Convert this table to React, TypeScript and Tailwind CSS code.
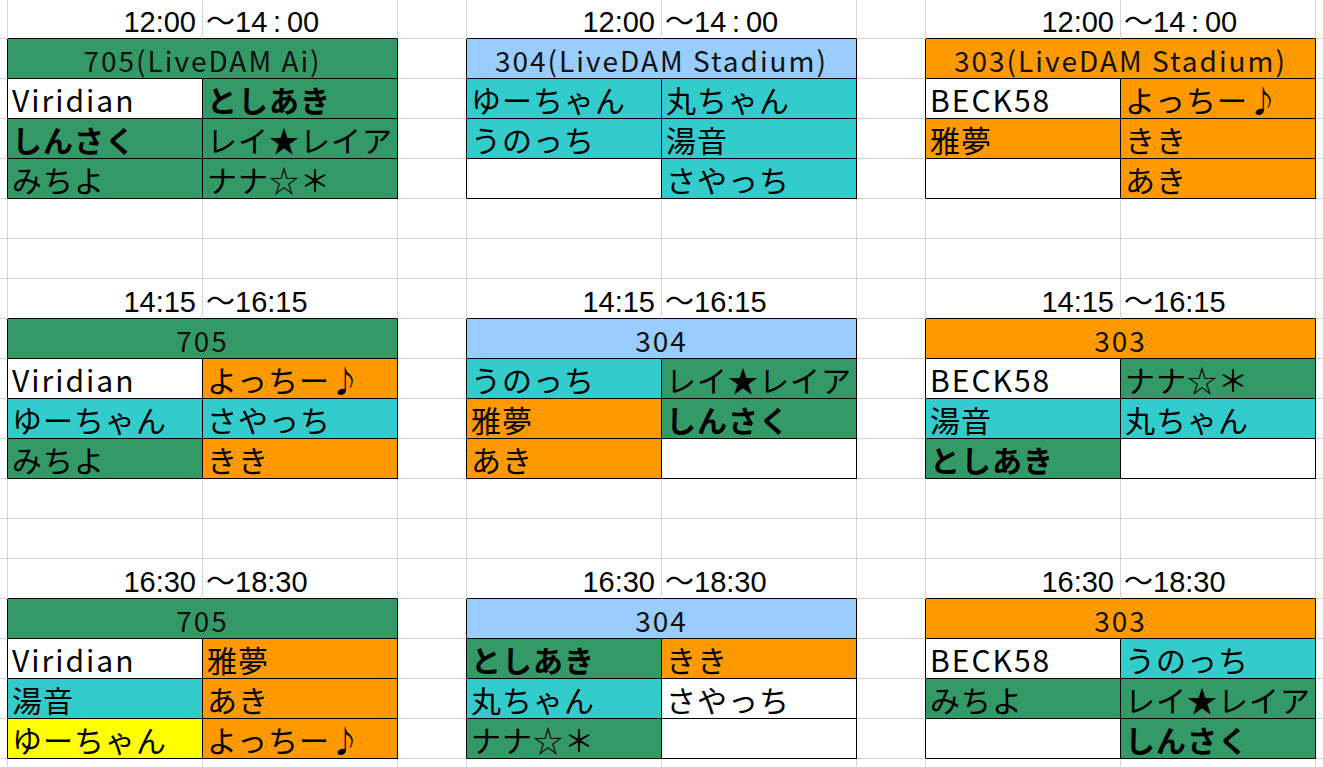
import React from "react";

type Fill = "white" | "green" | "cyan" | "orange" | "blue" | "yellow";
type Name = [string, Fill];

const fills: Record<Fill, string> = {
  white: "bg-white",
  green: "bg-[#339966]",
  cyan: "bg-[#33cccc]",
  orange: "bg-[#ff9900]",
  blue: "bg-[#99ccff]",
  yellow: "bg-[#ffff00]",
};

const boldNames = ["としあき", "しんさく"];

type Room = { title: string; fill: Fill; rows: [Name, Name][] };
type Slot = { from: string; to: string; rooms: Room[] };

const slots: Slot[] = [
  {
    from: "12:00",
    to: "～14\u2009:\u200900",
    rooms: [
      {
        title: "705(LiveDAM Ai)",
        fill: "green",
        rows: [
          [["Viridian", "white"], ["としあき", "green"]],
          [["しんさく", "green"], ["レイ★レイア", "green"]],
          [["みちよ", "green"], ["ナナ☆＊", "green"]],
        ],
      },
      {
        title: "304(LiveDAM Stadium)",
        fill: "blue",
        rows: [
          [["ゆーちゃん", "cyan"], ["丸ちゃん", "cyan"]],
          [["うのっち", "cyan"], ["湯音", "cyan"]],
          [["", "white"], ["さやっち", "cyan"]],
        ],
      },
      {
        title: "303(LiveDAM Stadium)",
        fill: "orange",
        rows: [
          [["BECK58", "white"], ["よっちー♪", "orange"]],
          [["雅夢", "orange"], ["きき", "orange"]],
          [["", "white"], ["あき", "orange"]],
        ],
      },
    ],
  },
  {
    from: "14:15",
    to: "～16:15",
    rooms: [
      {
        title: "705",
        fill: "green",
        rows: [
          [["Viridian", "white"], ["よっちー♪", "orange"]],
          [["ゆーちゃん", "cyan"], ["さやっち", "cyan"]],
          [["みちよ", "green"], ["きき", "orange"]],
        ],
      },
      {
        title: "304",
        fill: "blue",
        rows: [
          [["うのっち", "cyan"], ["レイ★レイア", "green"]],
          [["雅夢", "orange"], ["しんさく", "green"]],
          [["あき", "orange"], ["", "white"]],
        ],
      },
      {
        title: "303",
        fill: "orange",
        rows: [
          [["BECK58", "white"], ["ナナ☆＊", "green"]],
          [["湯音", "cyan"], ["丸ちゃん", "cyan"]],
          [["としあき", "green"], ["", "white"]],
        ],
      },
    ],
  },
  {
    from: "16:30",
    to: "～18:30",
    rooms: [
      {
        title: "705",
        fill: "green",
        rows: [
          [["Viridian", "white"], ["雅夢", "orange"]],
          [["湯音", "cyan"], ["あき", "orange"]],
          [["ゆーちゃん", "yellow"], ["よっちー♪", "orange"]],
        ],
      },
      {
        title: "304",
        fill: "blue",
        rows: [
          [["としあき", "green"], ["きき", "orange"]],
          [["丸ちゃん", "cyan"], ["さやっち", "white"]],
          [["ナナ☆＊", "green"], ["", "white"]],
        ],
      },
      {
        title: "303",
        fill: "orange",
        rows: [
          [["BECK58", "white"], ["うのっち", "cyan"]],
          [["みちよ", "green"], ["レイ★レイア", "green"]],
          [["", "white"], ["しんさく", "green"]],
        ],
      },
    ],
  },
];

const rowGrid =
  "grid h-[40px] grid-cols-[8px_195px_195px_69px_195px_195px_69px_195px_195px_1fr]";
const grid = "border-r border-b border-[#d4d4d4]";
const jp = "font-['Noto_Sans_CJK_JP','Noto_Sans',sans-serif]";
const latin = "font-['Liberation_Sans','Noto_Sans_CJK_JP',sans-serif]";

// plain sheet cell; right/bottom turn black where a coloured block begins
function Blank({ right, bottom }: { right?: boolean; bottom?: boolean }) {
  return (
    <div
      className={`border-r border-b ${right ? "border-r-black" : "border-r-[#d4d4d4]"} ${
        bottom ? "border-b-black" : "border-b-[#d4d4d4]"
      }`}
    />
  );
}

function EmptyRow() {
  return (
    <div className={rowGrid}>
      {Array.from({ length: 10 }).map((_, i) => (
        <div key={i} className={grid} />
      ))}
    </div>
  );
}

function TimeRow({ from, to }: { from: string; to: string }) {
  return (
    <div className={rowGrid}>
      <Blank />
      {[0, 1, 2].map((i) => (
        <React.Fragment key={i}>
          <div
            className={`flex items-end justify-end border-r border-b border-r-[#d4d4d4] border-b-black pr-[6px] pb-[1px] text-[29px] leading-none whitespace-nowrap text-black ${latin}`}
          >
            {from}
          </div>
          <div
            className={`flex items-end border-r border-b border-r-[#d4d4d4] border-b-black pl-[3px] pb-[1px] text-[29px] leading-none whitespace-nowrap text-black ${latin}`}
          >
            {to}
          </div>
          {i < 2 && <Blank />}
        </React.Fragment>
      ))}
      <Blank />
    </div>
  );
}

function HeaderRow({ rooms }: { rooms: Room[] }) {
  return (
    <div className={rowGrid}>
      <Blank right />
      {rooms.map((room, i) => (
        <React.Fragment key={i}>
          <div
            className={`col-span-2 flex items-end justify-center border-r border-b border-black pb-[4px] text-[28px] leading-none tracking-[2px] whitespace-nowrap text-[#111] ${jp} ${fills[room.fill]}`}
          >
            {room.title}
          </div>
          {i < 2 && <Blank right />}
        </React.Fragment>
      ))}
      <Blank />
    </div>
  );
}

function NameCell({ name }: { name: Name }) {
  const [text, fill] = name;
  const ascii = /^[A-Za-z0-9]+$/.test(text);
  return (
    <div
      className={`flex items-end border-r border-b border-black pl-[4px] pb-[4px] text-[30px] leading-none whitespace-nowrap text-black ${jp} ${fills[fill]} ${
        ascii ? "tracking-[2px]" : "tracking-[1px]"
      } ${boldNames.includes(text) ? "font-bold" : "font-normal"}`}
    >
      {text}
    </div>
  );
}

function NameRow({ cells }: { cells: [Name, Name][] }) {
  return (
    <div className={rowGrid}>
      <Blank right />
      {cells.map((pair, i) => (
        <React.Fragment key={i}>
          <NameCell name={pair[0]} />
          <NameCell name={pair[1]} />
          {i < 2 && <Blank right />}
        </React.Fragment>
      ))}
      <Blank />
    </div>
  );
}

export default function App() {
  return (
    <div className="h-[767px] w-[1324px] overflow-hidden bg-white">
      <div className="-mt-[1px] flex flex-col">
        {slots.map((slot, s) => (
          <React.Fragment key={s}>
            <TimeRow from={slot.from} to={slot.to} />
            <HeaderRow rooms={slot.rooms} />
            {[0, 1, 2].map((r) => (
              <NameRow key={r} cells={slot.rooms.map((room) => room.rows[r]) as [Name, Name][]} />
            ))}
            {s < 2 && (
              <>
                <EmptyRow />
                <EmptyRow />
              </>
            )}
          </React.Fragment>
        ))}
        <EmptyRow />
      </div>
    </div>
  );
}
